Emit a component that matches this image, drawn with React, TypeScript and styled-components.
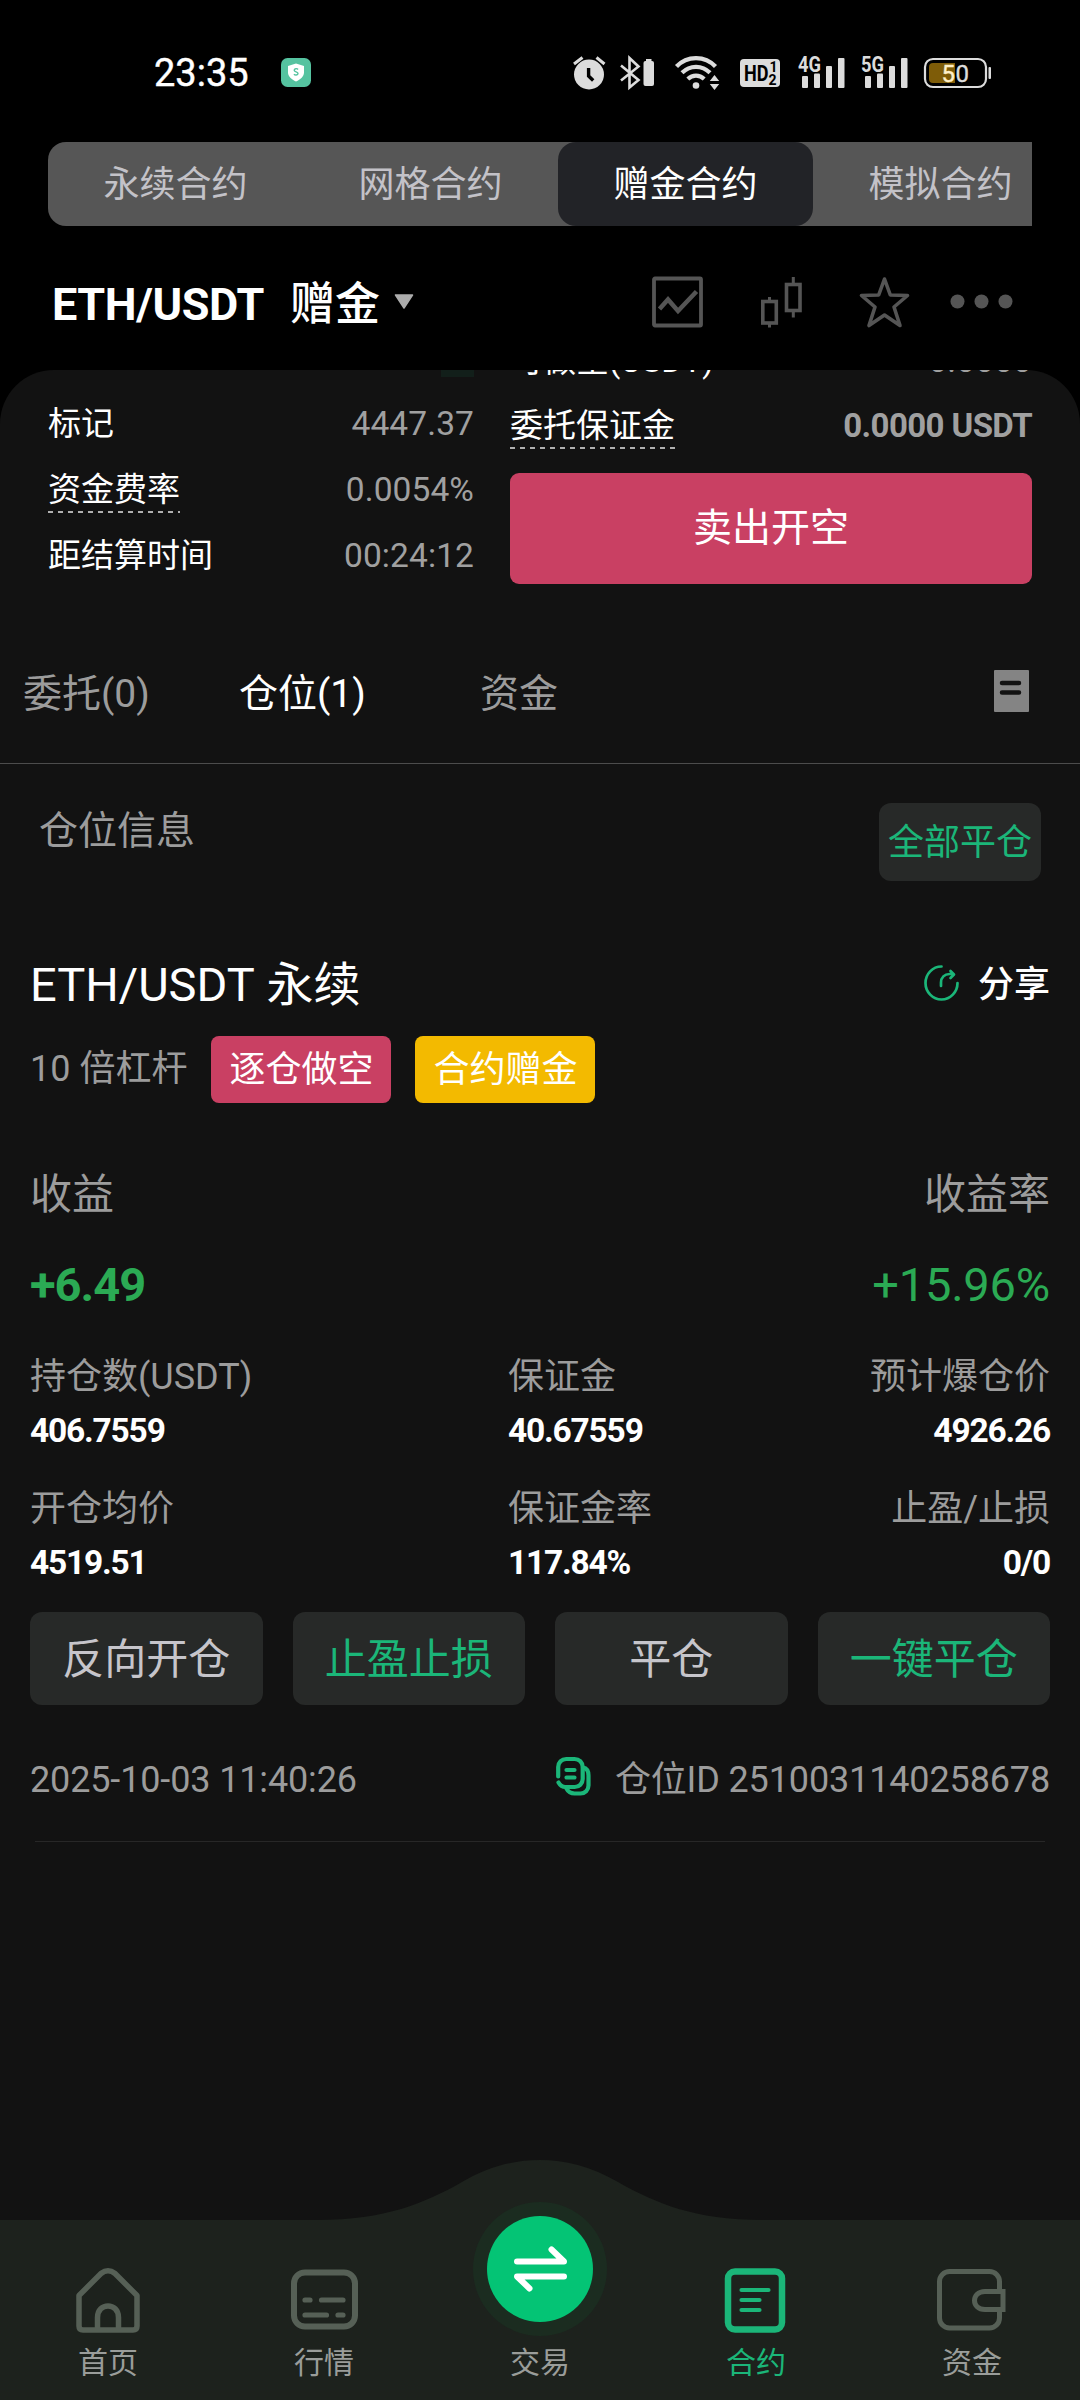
import React from "react";
import styled, { createGlobalStyle } from "styled-components";

const GREEN = "#1bb679";
const MUTED = "#9c9c9c";
const STATUS = "#dcdcdc";

const GlobalStyle = createGlobalStyle`
  html, body { margin: 0; padding: 0; background: #000; }
  * { box-sizing: border-box; }
  svg { display: block; flex: none; overflow: visible; }
`;

const Screen = styled.div`
  width: 1080px;
  height: 2400px;
  overflow: hidden;
  display: flex;
  flex-direction: column;
  background: #000;
  color: #fff;
  font-family: Roboto, "Noto Sans CJK SC", sans-serif;
  white-space: nowrap;
`;

/* ---------- status bar ---------- */
const StatusBar = styled.header`
  flex: none;
  height: 142px;
  padding: 4px 89px 0 154px;
  display: flex;
  align-items: center;
`;
const Clock = styled.time`
  font-size: 38px;
  line-height: 46px;
  width: 127px;
  font-weight: 400;
  -webkit-text-stroke: 0.4px #fff;
`;
const StatusIcons = styled.div`
  margin-left: auto;
  display: flex;
  align-items: center;
`;
const StatusSlot = styled.div<{ $gap: number }>`
  margin-left: ${(p) => p.$gap}px;
`;

/* ---------- contract type switch ---------- */
const Segments = styled.nav`
  flex: none;
  margin: 0 48px;
  height: 84px;
  display: flex;
  overflow: hidden;
  background: #565656;
  border-radius: 18px 0 0 18px;
`;
const Segment = styled.div<{ $active?: boolean }>`
  flex: 0 0 255px;
  height: 84px;
  padding-top: 2px;
  line-height: 82px;
  text-align: center;
  font-size: 36px;
  border-radius: 18px;
  color: ${(p) => (p.$active ? "#fff" : "#c3c2c8")};
  background: ${(p) => (p.$active ? "#222327" : "transparent")};
`;

/* ---------- pair title ---------- */
const PairBar = styled.div`
  flex: none;
  height: 144px;
  padding: 8px 66px 0 52px;
  display: flex;
  align-items: center;
`;
const Pair = styled.h1`
  margin: 5px 0 0;
  font-size: 45px;
  line-height: 60px;
  font-weight: 700;
  letter-spacing: -0.4px;
  width: 239px;
`;
const PairKind = styled.span`
  font-size: 45px;
  line-height: 60px;
  font-weight: 500;
  margin: 6px 14px 0 -1px;
`;
const PairTools = styled.div`
  margin-left: auto;
  display: flex;
  align-items: center;
`;
const ToolSlot = styled.div<{ $gap: number }>`
  margin-left: ${(p) => p.$gap}px;
`;

/* ---------- panel ---------- */
const Panel = styled.main`
  flex: none;
  height: 1790px;
  overflow: hidden;
  background: #121212;
  border-radius: 54px 54px 0 0;
`;
const TradeArea = styled.section`
  height: 214px;
  padding: 0 48px;
  display: grid;
  grid-template-columns: 426px 522px;
  column-gap: 36px;
`;
const Column = styled.div`
  display: flex;
  flex-direction: column;
`;
const DepthSliver = styled.div`
  align-self: flex-end;
  width: 33px;
  height: 7px;
  margin-bottom: 13px;
  background: #121f1a;
`;
const InfoRow = styled.div<{ $h: number }>`
  flex: none;
  height: ${(p) => p.$h}px;
  display: flex;
  align-items: center;
  justify-content: space-between;
  font-size: 33px;
`;
const ScrolledRow = styled(InfoRow)`
  margin: -42px 0 1px;
`;
const InfoLabel = styled.span<{ $dashed?: boolean }>`
  height: 46px;
  line-height: 46px;
  ${(p) =>
    p.$dashed
      ? `background: repeating-linear-gradient(90deg, #b0b0b0 0 5px, transparent 5px 10px) left bottom / 100% 2px no-repeat;`
      : ""}
`;
const InfoValue = styled.span<{ $bold?: boolean }>`
  line-height: 48px;
  color: #a0a0a0;
  font-size: ${(p) => (p.$bold ? 33 : 33.5)}px;
  font-weight: ${(p) => (p.$bold ? 700 : 400)};
  letter-spacing: ${(p) => (p.$bold ? "-0.6px" : "0.1px")};
`;
const SellButton = styled.button`
  flex: none;
  margin-top: 15px;
  height: 111px;
  border: 0;
  border-radius: 9px;
  background: #c94063;
  color: #fff;
  font: 39px/111px Roboto, "Noto Sans CJK SC", sans-serif;
  padding: 0;
`;

/* ---------- tabs ---------- */
const Tabs = styled.nav`
  height: 180px;
  padding: 40px 51px 0 23px;
  border-bottom: 1px solid #4c4c4c;
  display: flex;
  align-items: center;
`;
const Tab = styled.div<{ $w: number; $active?: boolean }>`
  width: ${(p) => p.$w}px;
  font-size: 39px;
  line-height: 54px;
  color: ${(p) => (p.$active ? "#fff" : MUTED)};
`;
const TabIcon = styled.div`
  margin: -5px 0 0 auto;
`;

/* ---------- position ---------- */
const PositionHead = styled.div`
  height: 117px;
  padding: 39px 39px 0 39px;
  display: flex;
  justify-content: space-between;
  align-items: flex-start;
`;
const PositionHeading = styled.h2`
  margin: 0;
  font-size: 39px;
  line-height: 57px;
  font-weight: 400;
  color: ${MUTED};
`;
const CloseAll = styled.button`
  width: 162px;
  height: 78px;
  padding: 2px 0 0;
  border: 0;
  border-radius: 12px;
  background: #272928;
  color: ${GREEN};
  font: 36px/76px Roboto, "Noto Sans CJK SC", sans-serif;
`;
const Card = styled.article`
  padding: 55px 30px 0;
`;
const Row = styled.div<{ $h: number; $mt?: number }>`
  height: ${(p) => p.$h}px;
  margin-top: ${(p) => p.$mt ?? 0}px;
  display: flex;
  align-items: center;
  justify-content: space-between;
`;
const Symbol = styled.h3`
  margin: 0;
  font-size: 47px;
  line-height: 60px;
  font-weight: 400;
  word-spacing: 1px;
`;
const Share = styled.div`
  display: flex;
  align-items: center;
  gap: 19px;
  font-size: 36px;
  line-height: 46px;
  font-weight: 500;

  svg { margin-top: -4px; }
`;
const TagRow = styled.div`
  height: 67px;
  margin-top: 2px;
  display: flex;
  align-items: center;
  gap: 24px;
`;
const Leverage = styled.span`
  font-size: 36px;
  line-height: 67px;
  color: ${MUTED};
`;
const Tag = styled.span<{ $bg: string }>`
  width: 180px;
  height: 67px;
  padding-top: 2px;
  line-height: 65px;
  text-align: center;
  font-size: 36px;
  border-radius: 8px;
  background: ${(p) => p.$bg};
`;
const YieldLabel = styled.span`
  padding-top: 2px;
  font-size: 42px;
  line-height: 58px;
  color: ${MUTED};
`;
const YieldValue = styled.span<{ $bold?: boolean }>`
  padding-top: 2px;
  font-size: 47px;
  line-height: 60px;
  color: #2baa54;
  font-weight: ${(p) => (p.$bold ? 700 : 400)};
  letter-spacing: ${(p) => (p.$bold ? "-1px" : "-0.2px")};
`;
const Stats = styled.dl`
  margin: 36px 0 0;
  display: grid;
  grid-template-columns: 478px 240px 1fr;
  row-gap: 24px;
`;
const Stat = styled.div<{ $right?: boolean }>`
  text-align: ${(p) => (p.$right ? "right" : "left")};
`;
const StatLabel = styled.dt`
  font-size: 36px;
  line-height: 54px;
  height: 54px;
  color: ${MUTED};
`;
const StatValue = styled.dd`
  margin: 0;
  font-size: 33.5px;
  line-height: 54px;
  height: 54px;
  font-weight: 700;
  letter-spacing: -1.2px;
`;
const Actions = styled.div`
  margin-top: 22px;
  display: grid;
  grid-template-columns: repeat(4, 1fr);
  gap: 30px;
`;
const Action = styled.button<{ $green?: boolean }>`
  height: 93px;
  padding: 2px 0 0;
  border: 0;
  border-radius: 12px;
  background: #272928;
  color: ${(p) => (p.$green ? GREEN : "#c6c5cb")};
  font: 42px/91px Roboto, "Noto Sans CJK SC", sans-serif;
`;
const Meta = styled.div`
  display: flex;
  align-items: center;
  gap: 23px;
  font-size: 36px;
  line-height: 58px;
  letter-spacing: -0.14px;
  color: ${MUTED};

  svg { margin-top: -4px; }
`;
const Divider = styled.hr`
  margin: 31px 5px 0;
  border: 0;
  height: 1px;
  background: #272727;
`;

/* ---------- bottom bar ---------- */
const BottomBar = styled.footer`
  flex: none;
  position: relative;
  height: 240px;
  background: #121212;
`;
const BarShape = styled.svg`
  position: absolute;
  inset: 0;
`;
const BarItems = styled.div`
  position: relative;
  height: 100%;
  display: grid;
  grid-template-columns: repeat(5, 216px);
`;
const BarItem = styled.div<{ $active?: boolean }>`
  padding-bottom: 17px;
  display: flex;
  flex-direction: column;
  align-items: center;
  justify-content: flex-end;
  gap: 9px;
  font-size: 30px;
  line-height: 40px;
  color: ${(p) => (p.$active ? GREEN : "#9a9d9a")};
`;
const Halo = styled.div`
  width: 134px;
  height: 134px;
  margin-bottom: -2px;
  border-radius: 50%;
  background: #1b2c20;
  display: flex;
  align-items: center;
  justify-content: center;
`;
const SwapDisc = styled.div`
  width: 106px;
  height: 106px;
  border-radius: 50%;
  background: #04c475;
`;

const SignalIcon = ({ label, x }: { label: string; x: number }) => (
  <svg width="47" height="34" viewBox="0 0 47 34">
    <text x="0" y="15.5" fill={STATUS} fontFamily="Roboto, sans-serif" fontWeight="700" fontSize="21.5" textLength="23" lengthAdjust="spacingAndGlyphs">{label}</text>
    <g fill={STATUS}>
      <rect x={x} y="20" width="6" height="12" rx="1" />
      <rect x={x + 12} y="17.5" width="6" height="14.5" rx="1" />
      <rect x={x + 24} y="10" width="6" height="22" rx="1" />
      <rect x={x + 36} y="2" width="6.5" height="30" rx="1" />
    </g>
  </svg>
);

const StatusGlyphs = () => (
  <StatusIcons>
    <svg width="32" height="34" viewBox="0 0 32 34">
      <circle cx="15" cy="18.5" r="15" fill={STATUS} />
      <path d="M0 8 8.500 1.500M30.500 8 22.500 1.500" stroke={STATUS} strokeWidth="3" fill="none" />
      <path d="M14.600 12v8l4.600 4.400" stroke="#000" strokeWidth="3.400" fill="none" />
    </svg>
    <StatusSlot $gap={14}>
      <svg width="35" height="34" viewBox="0 0 35 34">
        <path d="M1 9.500 18.500 24 9.500 31.500V2L18.500 10.500 1 24.500" stroke={STATUS} strokeWidth="2.600" fill="none" />
        <rect x="23.500" y="5" width="10.500" height="25" rx="2" fill={STATUS} />
        <rect x="26" y="3" width="5.500" height="3" fill={STATUS} />
      </svg>
    </StatusSlot>
    <StatusSlot $gap={20}>
      <svg width="45" height="34" viewBox="0 0 45 34">
        <g stroke={STATUS} strokeWidth="4.200" fill="none">
          <path d="M1.500 10.500C12-.8 30-.8 40.500 10.500" />
          <path d="M7 16.800c8-8 20-8 28 0" />
          <path d="M12.800 23c4.800-4.500 11.600-4.500 16.400 0" />
        </g>
        <circle cx="21" cy="29.500" r="3.300" fill={STATUS} />
        <path d="M34.800 25h9.400l-4.700-6zM34.800 28h9.400l-4.700 6z" fill={STATUS} />
      </svg>
    </StatusSlot>
    <StatusSlot $gap={20}>
      <svg width="40" height="34" viewBox="0 0 40 34">
        <rect y="3" width="40" height="28" rx="4" fill={STATUS} />
        <g fontFamily="Roboto, sans-serif" fontWeight="700" fill="#000">
          <text x="4" y="24.500" fontSize="22" textLength="24.500" lengthAdjust="spacingAndGlyphs">HD</text>
          <text x="29.500" y="16" fontSize="14">1</text>
          <text x="28.500" y="28.500" fontSize="14">2</text>
        </g>
      </svg>
    </StatusSlot>
    <StatusSlot $gap={18}><SignalIcon label="4G" x={4} /></StatusSlot>
    <StatusSlot $gap={16}><SignalIcon label="5G" x={4} /></StatusSlot>
    <StatusSlot $gap={16}>
      <svg width="67" height="34" viewBox="0 0 67 34">
        <rect x="1" y="3" width="61" height="28" rx="8" stroke={STATUS} strokeWidth="2.200" fill="none" />
        <rect x="64.500" y="11" width="2.500" height="12" rx="1" fill={STATUS} />
        <path d="M9 7h22v20H9a4 4 0 0 1-4-4V11a4 4 0 0 1 4-4z" fill="#7e5c08" />
        <g fontFamily="Roboto, sans-serif" fontSize="24">
          <text x="17.500" y="25.500" fill="#fff0c8" stroke="#fff0c8" strokeWidth="0.400">5</text>
          <text x="31.500" y="25.500" fill={STATUS} stroke={STATUS} strokeWidth="0.400">0</text>
        </g>
      </svg>
    </StatusSlot>
  </StatusIcons>
);

const stats = [
  ["持仓数(USDT)", "406.7559"],
  ["保证金", "40.67559"],
  ["预计爆仓价", "4926.26"],
  ["开仓均价", "4519.51"],
  ["保证金率", "117.84%"],
  ["止盈/止损", "0/0"],
];

export default function App() {
  return (
    <>
      <GlobalStyle />
      <Screen>
        <StatusBar>
          <Clock>23:35</Clock>
          <svg width="30" height="30" viewBox="0 0 30 30">
            <rect width="30" height="29" rx="6.500" fill="#55c3a0" />
            <path d="M15 5.500l8 2.500v6.500c0 4-3.500 7-8 9-4.500-2-8-5-8-9V8z" fill="#fff" />
            <path d="M17 11.500c-.8-1.200-3.800-1.200-3.800.7 0 2 3.800 1.300 3.800 3.300 0 1.900-3.200 1.900-4 .6" stroke="#55c3a0" strokeWidth="1.400" fill="none" />
          </svg>
          <StatusGlyphs />
        </StatusBar>

        <Segments>
          <Segment>永续合约</Segment>
          <Segment>网格合约</Segment>
          <Segment $active>赠金合约</Segment>
          <Segment>模拟合约</Segment>
        </Segments>

        <PairBar>
          <Pair>ETH/USDT</Pair>
          <PairKind>赠金</PairKind>
          <svg width="20" height="16" viewBox="0 0 20 16">
            <path d="M1.500 1h17L10 14z" fill="#acacac" stroke="#acacac" strokeLinejoin="round" strokeWidth="1.500" />
          </svg>
          <PairTools>
            <svg width="52" height="52" viewBox="0 0 52 52" fill="none" stroke="#555">
              <rect x="2" y="2.500" width="47" height="47" rx="1" strokeWidth="3.800" />
              <path d="M7.500 33 16 23.500 26 35 44.500 15.500" strokeWidth="4.500" />
            </svg>
            <ToolSlot $gap={57}>
              <svg width="42" height="52" viewBox="0 0 42 52" fill="none" stroke="#555">
                <rect x="1.800" y="25.500" width="13.500" height="21.500" strokeWidth="3.600" />
                <path d="M8.500 21v5M8.500 47v4.500" strokeWidth="3" />
                <rect x="25.500" y="8.500" width="13.500" height="26" strokeWidth="3.600" />
                <path d="M32.300 1v7M32.300 35v6.500" strokeWidth="3" />
              </svg>
            </ToolSlot>
            <ToolSlot $gap={56}>
              <svg width="52" height="52" viewBox="0 0 52 52" fill="none" stroke="#555">
                <path d="M25.500 3 31.300 19 48.500 19.500 35 31 41 49.500 25.500 39 10 49.500 16 31 2.500 19.500 19.700 19z" strokeWidth="3.600" strokeLinejoin="round" />
              </svg>
            </ToolSlot>
            <ToolSlot $gap={39}>
              <svg width="64" height="52" viewBox="0 0 64 52" fill="#555">
                <circle cx="7.500" cy="25.500" r="7" />
                <circle cx="31.500" cy="25.500" r="7" />
                <circle cx="55.500" cy="25.500" r="7" />
              </svg>
            </ToolSlot>
          </PairTools>
        </PairBar>

        <Panel>
          <TradeArea>
            <Column>
              <DepthSliver />
              <InfoRow $h={67}>
                <InfoLabel>标记</InfoLabel>
                <InfoValue>4447.37</InfoValue>
              </InfoRow>
              <InfoRow $h={65}>
                <InfoLabel $dashed>资金费率</InfoLabel>
                <InfoValue>0.0054%</InfoValue>
              </InfoRow>
              <InfoRow $h={67}>
                <InfoLabel>距结算时间</InfoLabel>
                <InfoValue>00:24:12</InfoValue>
              </InfoRow>
            </Column>
            <Column>
              <ScrolledRow $h={65}>
                <InfoLabel>可做空(USDT)</InfoLabel>
                <InfoValue>0.0000</InfoValue>
              </ScrolledRow>
              <InfoRow $h={64}>
                <InfoLabel $dashed>委托保证金</InfoLabel>
                <InfoValue $bold>0.0000 USDT</InfoValue>
              </InfoRow>
              <SellButton>卖出开空</SellButton>
            </Column>
          </TradeArea>

          <Tabs>
            <Tab $w={216}>委托(0)</Tab>
            <Tab $w={241} $active>仓位(1)</Tab>
            <Tab $w={80}>资金</Tab>
            <TabIcon>
              <svg width="35" height="44" viewBox="0 0 35 44">
                <rect y="1" width="35" height="42" rx="1" fill="#848484" />
                <path d="M8 14h17M8 23.500h17" stroke="#121212" strokeWidth="4.500" strokeLinecap="round" />
              </svg>
            </TabIcon>
          </Tabs>

          <PositionHead>
            <PositionHeading>仓位信息</PositionHeading>
            <CloseAll>全部平仓</CloseAll>
          </PositionHead>

          <Card>
            <Row $h={98}>
              <Symbol>ETH/USDT 永续</Symbol>
              <Share>
                <svg width="35" height="36" viewBox="0 0 35 36" fill="none" stroke={GREEN} strokeWidth="2.700" strokeLinecap="round">
                  <path d="M17.500 1.500A16 16.500 0 1 0 33.500 18" />
                  <path d="M17 21v-3.500c0-5 3.500-8.500 8.500-8.500H29M26.500 6 30 9.500 26.500 13" strokeLinejoin="round" />
                </svg>
                分享
              </Share>
            </Row>
            <TagRow>
              <Leverage>10 倍杠杆</Leverage>
              <Tag $bg="#c94063">逐仓做空</Tag>
              <Tag $bg="#f3ba00">合约赠金</Tag>
            </TagRow>
            <Row $h={60} $mt={61}>
              <YieldLabel>收益</YieldLabel>
              <YieldLabel>收益率</YieldLabel>
            </Row>
            <Row $h={60} $mt={30}>
              <YieldValue $bold>+6.49</YieldValue>
              <YieldValue>+15.96%</YieldValue>
            </Row>
            <Stats>
              {stats.map(([label, value], i) => (
                <Stat key={label} $right={i % 3 === 2}>
                  <StatLabel>{label}</StatLabel>
                  <StatValue>{value}</StatValue>
                </Stat>
              ))}
            </Stats>
            <Actions>
              <Action>反向开仓</Action>
              <Action $green>止盈止损</Action>
              <Action>平仓</Action>
              <Action $green>一键平仓</Action>
            </Actions>
            <Row $h={60} $mt={45}>
              <Meta>2025-10-03 11:40:26</Meta>
              <Meta>
                <svg width="36" height="44" viewBox="0 0 36 44" fill="none" stroke={GREEN} strokeWidth="4.200" strokeLinecap="round" strokeLinejoin="round">
                  <path d="M2.200 20.500V11a8 8 0 0 1 8-8h8.500a8 8 0 0 1 8 8v12a8 8 0 0 1-8 8H9.500q-4.500 0-7-4.500" />
                  <path d="M27 11.500q5.500 1 5.500 8v10a8 8 0 0 1-8 8h-6q-5.500 0-8-5" />
                  <path d="M10.500 14h8M10.500 21.500h8" />
                </svg>
                仓位ID 2510031140258678
              </Meta>
            </Row>
            <Divider />
          </Card>
        </Panel>

        <BottomBar>
          <BarShape width="1080" height="240" viewBox="0 0 1080 240">
            <path d="M0 60H318C385 60 425 43 462 22C490 6 515 0 540 0S590 6 618 22C655 43 695 60 762 60H1080V240H0z" fill="#1d221d" />
          </BarShape>
          <BarItems>
            <BarItem>
              <svg width="66" height="66" viewBox="0 0 66 66" fill="none" stroke="#566056" strokeWidth="5.500" strokeLinejoin="round">
                <path d="M4 27.500 26 5.500Q33 0 40 5.500L62 27.500V58Q62 62 58 62H8Q4 62 4 58z" />
                <path d="M22.500 61V49.500C22.500 34 43.500 34 43.500 49.500V61" />
              </svg>
              首页
            </BarItem>
            <BarItem>
              <svg width="66" height="66" viewBox="0 0 66 66" fill="none" stroke="#566056" strokeWidth="6">
                <rect x="3" y="4.500" width="61" height="54" rx="11" />
                <path d="M14 32h5M30.500 32H52M14 47h21.500M47 47h5" strokeWidth="5.200" strokeLinecap="round" />
              </svg>
              行情
            </BarItem>
            <BarItem>
              <Halo>
                <SwapDisc>
                  <svg width="106" height="106" viewBox="0 0 106 106" fill="none" stroke="#fff" strokeWidth="6" strokeLinecap="round" strokeLinejoin="round">
                    <path d="M30 45.500H77L64.500 33.500M77 60.500H30L42.500 72.500" />
                  </svg>
                </SwapDisc>
              </Halo>
              交易
            </BarItem>
            <BarItem $active>
              <svg width="66" height="66" viewBox="0 0 66 66" fill="none" stroke={GREEN} strokeWidth="6.500">
                <rect x="5" y="3.500" width="54" height="58" rx="7" />
                <path d="M18.500 22h27M18.500 32h18M18.500 42h18" strokeWidth="4.200" strokeLinecap="round" />
              </svg>
              合约
            </BarItem>
            <BarItem>
              <svg width="70" height="66" viewBox="0 0 70 66" fill="none" stroke="#566056" strokeWidth="5">
                <path d="M62.500 23V13.500a10 10 0 0 0-10-10H12.500A10 10 0 0 0 2.500 13.500V50a10 10 0 0 0 10 10H52.500a10 10 0 0 0 10-10V42" />
                <path d="M66 23.500H48C34 23.500 34 41.500 48 41.500H66z" />
              </svg>
              资金
            </BarItem>
          </BarItems>
        </BottomBar>
      </Screen>
    </>
  );
}
